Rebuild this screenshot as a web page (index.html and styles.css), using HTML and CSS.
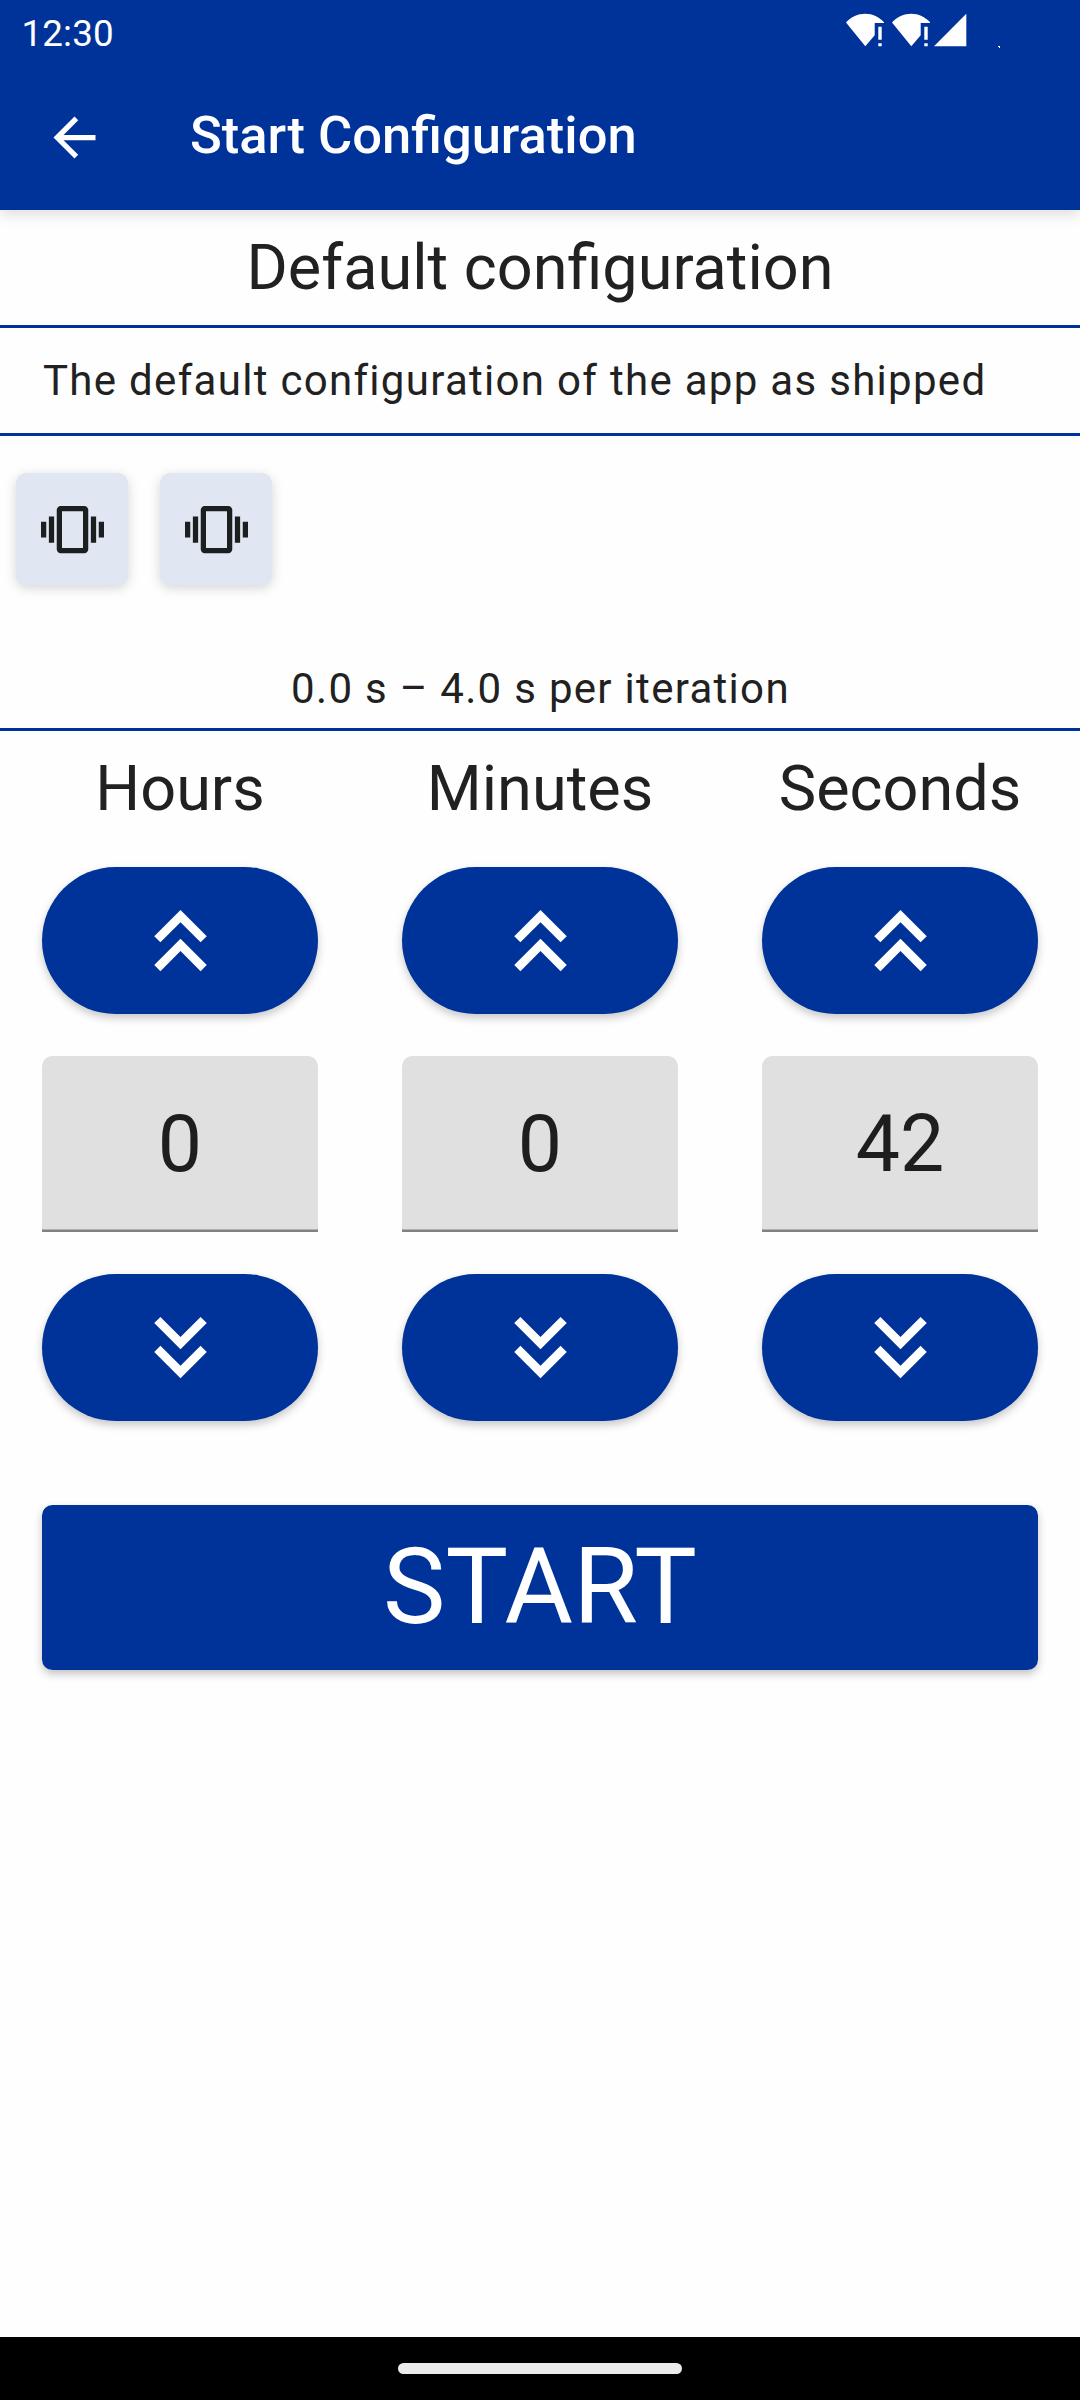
FILE: index.html
```html
<!DOCTYPE html>
<html lang="en">
<head>
<meta charset="utf-8">
<title>Start Configuration</title>
<link rel="stylesheet" href="styles.css">
</head>
<body>
<svg class="defs" width="0" height="0" aria-hidden="true">
  <symbol id="vibration" viewBox="0 0 24 24"><path d="M0 15h2V9H0v6zm3 2h2V7H3v10zm19-8v6h2V9h-2zm-3 8h2V7h-2v10zM16.500 3h-9C6.670 3 6 3.670 6 4.500v15c0 .83.67 1.500 1.500 1.500h9c.83 0 1.500-.67 1.500-1.500v-15c0-.83-.67-1.500-1.500-1.500zM16 19H8V5h8v14z"/></symbol>
  <symbol id="double-up" viewBox="0 0 24 24"><path d="M6 17.590 7.410 19 12 14.420 16.590 19 18 17.590l-6-6zM6 11l1.410 1.410L12 7.830l4.590 4.580L18 11l-6-6z"/></symbol>
  <symbol id="double-down" viewBox="0 0 24 24"><path d="M18 6.410 16.590 5 12 9.580 7.410 5 6 6.410l6 6zM18 13l-1.410-1.410L12 16.170l-4.590-4.580L6 13l6 6z"/></symbol>
  <symbol id="wifi-alert" viewBox="0 0 38 34"><path d="M0 9.500C5 4 12 .8 19.300.8S33 4 38 9.300V10h-9.300v12.200L19.300 33.300z"/><path d="M32.300 13.800h3.400v13h-3.400zM32.300 30.200h3.400v3h-3.400z"/></symbol>
</svg>
<div class="screen">
  <header class="top">
    <div class="status">
      <span class="time">12:30</span>
      <div class="signals">
        <svg class="wifi"><use href="#wifi-alert"/></svg>
        <svg class="wifi"><use href="#wifi-alert"/></svg>
        <svg class="cell" viewBox="0 0 33 34"><path d="M0 33.300 32.300.8v32.500z"/></svg>
        <svg class="battery" viewBox="0 0 2 2"><path d="M0 0h2v2H1V1H0z"/></svg>
      </div>
    </div>
    <div class="appbar">
      <svg class="back" viewBox="0 0 24 24"><path d="M20 11H7.830l5.590-5.590L12 4l-8 8 8 8 1.410-1.410L7.830 13H20v-2z"/></svg>
      <h1 class="title">Start Configuration</h1>
    </div>
  </header>
  <main class="content">
    <h2 class="name">Default configuration</h2>
    <p class="description">The default configuration of the app as shipped</p>
    <div class="chips">
      <div class="chip"><svg><use href="#vibration"/></svg></div>
      <div class="chip"><svg><use href="#vibration"/></svg></div>
    </div>
    <p class="duration">0.0 s – 4.0 s per iteration</p>
    <div class="pickers">
      <div class="picker">
        <div class="label">Hours</div>
        <div class="step"><svg><use href="#double-up"/></svg></div>
        <div class="value">0</div>
        <div class="step"><svg><use href="#double-down"/></svg></div>
      </div>
      <div class="picker">
        <div class="label">Minutes</div>
        <div class="step"><svg><use href="#double-up"/></svg></div>
        <div class="value">0</div>
        <div class="step"><svg><use href="#double-down"/></svg></div>
      </div>
      <div class="picker">
        <div class="label">Seconds</div>
        <div class="step"><svg><use href="#double-up"/></svg></div>
        <div class="value">42</div>
        <div class="step"><svg><use href="#double-down"/></svg></div>
      </div>
    </div>
    <div class="start">START</div>
  </main>
  <footer class="nav"><div class="pill"></div></footer>
</div>
</body>
</html>
```
FILE: styles.css
```css
* { box-sizing: border-box; }
body { margin: 0; font-family: Roboto, sans-serif; color: #212121; }
h1, h2, p { margin: 0; font-weight: 400; }
svg { display: block; fill: currentColor; }
.defs { position: absolute; }

.screen { width: 1080px; height: 2400px; display: flex; flex-direction: column; background: #fefefe; }

.top { height: 210px; flex: none; background: #003399; color: #fff; box-shadow: 0 4px 14px rgba(0, 0, 0, .14); }
.status { height: 63px; display: flex; justify-content: space-between; padding: 0 80px 0 21.500px; }
.time { font-size: 36.75px; line-height: 67px; letter-spacing: .15px; }
.signals { display: flex; padding-top: 13px; }
.wifi { width: 38px; height: 34px; margin-right: 8px; }
.cell { width: 33px; height: 34px; margin-left: -4px; }
.battery { width: 2px; height: 2px; margin: 33px 0 0 31px; }
.appbar { height: 147px; display: flex; align-items: center; padding-left: 43px; gap: 84px; }
.back { width: 63px; height: 63px; margin-top: 1px; }
.title { font-size: 52.5px; font-weight: 500; line-height: 63px; padding-bottom: 2px; }

.content { flex: 1; }
.name { height: 118px; font-size: 63px; line-height: 115px; text-align: center; border-bottom: 3px solid #003399; }
.description { height: 108px; padding-left: 43px; font-size: 42px; line-height: 105px; letter-spacing: 1.3px; border-bottom: 3px solid #003399; }
.chips { display: flex; gap: 32px; padding: 37px 16px 63px; }
.chip { width: 112px; height: 112px; display: flex; align-items: center; justify-content: center; border-radius: 10.5px; background: #e0e6f2; color: #1c1f20; box-shadow: 0 3px 12px rgba(0, 0, 0, .17); }
.chip svg { width: 63px; height: 63px; }
.duration { height: 83px; padding-left: 1px; font-size: 42px; line-height: 82px; letter-spacing: 1.3px; text-align: center; border-bottom: 3px solid #003399; }

.pickers { display: grid; grid-template-columns: repeat(3, 1fr); }
.picker { padding: 0 42px; }
.label { margin: 0 -42px 21px; font-size: 63px; line-height: 115px; text-align: center; }
.step { height: 147px; display: flex; align-items: center; justify-content: center; border-radius: 73.5px; background: #003399; color: #fff; box-shadow: 0 4px 9px rgba(0, 0, 0, .22); }
.step svg { width: 105px; height: 105px; }
.value { height: 176px; margin: 42px 0; font-size: 78.75px; line-height: 176px; text-align: center; color: #1e1e1e; background: #e0e0e0; border-radius: 10.5px 10.5px 0 0; box-shadow: inset 0 -2.6px #818181; }

.start { height: 165px; margin: 84px 42px 0; border-radius: 10.5px; background: #003399; color: #fff; font-size: 105px; line-height: 165px; letter-spacing: .3px; text-align: center; box-shadow: 0 4px 9px rgba(0, 0, 0, .24); }

.nav { height: 63px; flex: none; display: flex; justify-content: center; padding-top: 26px; background: #000; }
.pill { width: 284px; height: 11px; border-radius: 5.5px; background: #ebebeb; }
```
